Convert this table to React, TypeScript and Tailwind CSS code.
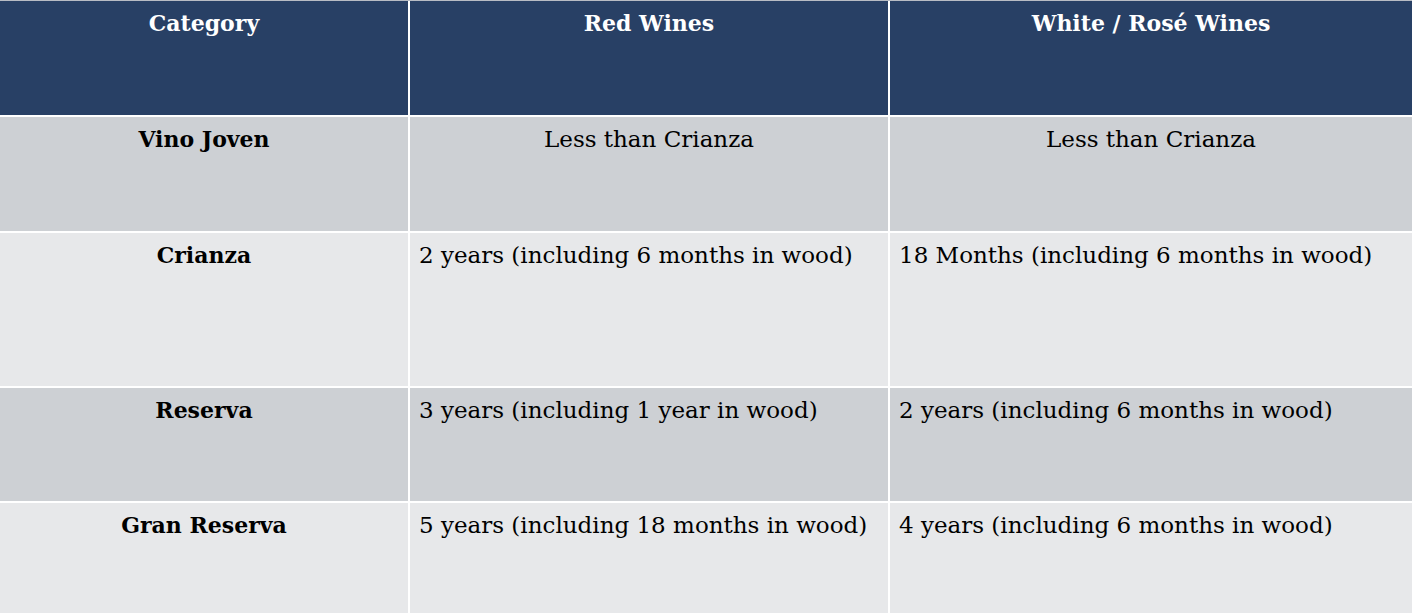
import React from "react";

const rows = [
  { cat: "Vino Joven", red: "Less than Crianza", white: "Less than Crianza", center: true, bg: "bg-[#cdd0d4]", h: "h-[114px]" },
  { cat: "Crianza", red: "2 years (including 6 months in wood)", white: "18 Months (including 6 months in wood)", center: false, bg: "bg-[#e7e8ea]", h: "h-[153px]" },
  { cat: "Reserva", red: "3 years (including 1 year in wood)", white: "2 years (including 6 months in wood)", center: false, bg: "bg-[#cdd0d4]", h: "h-[113px]" },
  { cat: "Gran Reserva", red: "5 years (including 18 months in wood)", white: "4 years (including 6 months in wood)", center: false, bg: "bg-[#e7e8ea]", h: "h-[111px]" },
];

export default function App() {
  return (
    <div
      className="w-[1412px] h-[613px] overflow-hidden bg-white text-[23px] leading-[30px] text-black"
      style={{ fontFamily: '"DejaVu Serif", "Liberation Serif", serif' }}
    >
      <div className="h-px bg-[#b8bcc4]" />
      <div className="grid grid-cols-[408px_478px_522px] gap-x-[2px] gap-y-[2px] bg-white">
        <div className="h-[114px] bg-[#284065] text-white font-bold text-[22px] text-center pt-[7px]">Category</div>
        <div className="h-[114px] bg-[#284065] text-white font-bold text-[22px] text-center pt-[7px]">Red Wines</div>
        <div className="h-[114px] bg-[#284065] text-white font-bold text-[22px] text-center pt-[7px]">White / Rosé Wines</div>
        {rows.map((r) => (
          <React.Fragment key={r.cat}>
            <div className={`${r.h} ${r.bg} font-bold text-[22px] text-center pt-[7px]`}>{r.cat}</div>
            <div className={`${r.h} ${r.bg} pt-[7px] ${r.center ? "text-center" : "pl-[9px]"}`}>{r.red}</div>
            <div className={`${r.h} ${r.bg} pt-[7px] ${r.center ? "text-center" : "pl-[9px]"}`}>{r.white}</div>
          </React.Fragment>
        ))}
      </div>
    </div>
  );
}
